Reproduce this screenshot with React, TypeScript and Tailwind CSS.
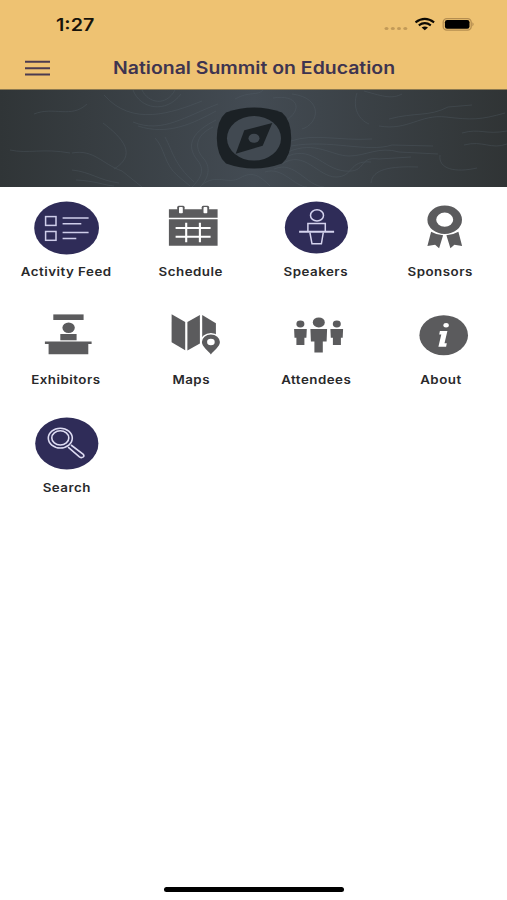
import type { ReactNode } from "react";

const NAVY = "#2f2c58";
const GRAY = "#5b5b5d";

const ActivityIcon = () => (
  <>
    <ellipse cx="40.6" cy="28" rx="32.4" ry="26.6" fill={NAVY} />
    <g fill="none" stroke="#cfcdea" strokeWidth="1.5">
      <rect x="19.6" y="16.6" width="10.4" height="8.8" />
      <rect x="19.6" y="31.5" width="10.4" height="8.8" />
      <path d="M36.6 18H62.6M36.6 23.7H55.3M36.6 32.6H62.6M36.6 38.4H50.3" />
    </g>
  </>
);

const ScheduleIcon = () => (
  <>
    <g fill={GRAY}>
      <path d="M17.9 9.3H66.6V17.7H17.9Z" />
      <path d="M17.9 19.3H66.6V45.7H17.9Z" />
      <rect x="26.2" y="5.7" width="7.4" height="9" rx="1.5" />
      <rect x="50.7" y="5.7" width="7.4" height="9" rx="1.5" />
    </g>
    <rect x="28" y="7.1" width="3.8" height="6.2" rx="0.8" fill="#fff" />
    <rect x="52.5" y="7.1" width="3.8" height="6.2" rx="0.8" fill="#fff" />
    <path
      d="M35.2 22.7V42.3M48.9 22.7V42.3M24.6 28H59.6M24.6 36.7H59.6"
      stroke="#fff"
      strokeWidth="2.1"
    />
  </>
);

const SpeakersIcon = () => (
  <>
    <ellipse cx="40.4" cy="27.4" rx="31.6" ry="26" fill={NAVY} />
    <g fill="none" stroke="#d5d3ee" strokeWidth="1.5">
      <ellipse cx="41" cy="15.4" rx="6.5" ry="5.6" />
      <path d="M31.9 31.5V23.5H49.3V31.5" />
      <path d="M23.1 31.8H58.1" strokeWidth="1.9" />
      <path d="M33.9 32.5L36 43.8H45.4L47.3 32.5" />
    </g>
  </>
);

const SponsorsIcon = () => (
  <g fill={GRAY}>
    <path
      fillRule="evenodd"
      d="M26.4 19.7a17.3 14.2 0 1 0 34.6 0a17.3 14.2 0 1 0 -34.6 0ZM35.2 19.7a8.5 7.1 0 1 1 17 0a8.5 7.1 0 1 1 -17 0Z"
    />
    <path d="M30.1 31.7Q35.5 34.8 42.1 35.3L38.1 48.3L34.1 44.7L26.4 46Z" />
    <path d="M57.4 31.7Q52 34.8 45.4 35.3L49.4 48.3L53.4 44.7L61.1 46Z" />
  </g>
);

const ExhibitorsIcon = () => (
  <g fill={GRAY}>
    <path d="M27.3 6.4H57.6V12H27.3Z" />
    <ellipse cx="42.6" cy="19.8" rx="6.2" ry="5.2" />
    <path d="M34.3 26H50.6V32.3H34.3Z" />
    <path d="M18.9 33.6H65.6V36H62.3V46.3H22.6V36H18.9Z" />
  </g>
);

const MapsIcon = () => (
  <>
    <g fill={GRAY}>
      <path d="M20.6 6.3L34.2 14V42.3L20.6 34.3Z" />
      <path d="M36.4 14L48.9 7V35.5L36.4 42.6Z" />
      <path d="M51.2 7L64.9 15.3V32H51.2Z" />
    </g>
    <path
      fill={GRAY}
      stroke="#fff"
      strokeWidth="3"
      paintOrder="stroke"
      d="M59.9 46.4C57.5 43 50.9 38.6 50.9 34A9 7.6 0 0 1 68.9 34C68.9 38.6 62.3 43 59.9 46.4Z"
    />
    <ellipse cx="59.9" cy="34" rx="3.8" ry="3.2" fill="#fff" />
  </>
);

const AttendeesIcon = () => (
  <g fill={GRAY}>
    <ellipse cx="42.8" cy="14.4" rx="6" ry="5" />
    <path d="M34.4 21H51.1L50.6 33.4H46.8V44.6H38.4V33.4H34.9Z" />
    <ellipse cx="24.4" cy="16" rx="4" ry="3.4" />
    <path d="M18.1 21H30.8L30.4 29.8H28.4V37H20.4V29.8H18.5Z" />
    <ellipse cx="60.8" cy="16" rx="4" ry="3.4" />
    <path d="M54.4 21H67.1L66.7 29.8H64.9V37H56.9V29.8H54.8Z" />
  </g>
);

const AboutIcon = () => (
  <>
    <ellipse cx="42.7" cy="27.2" rx="24.3" ry="20" fill={GRAY} />
    <g fill="#fff">
      <ellipse cx="45.1" cy="17.3" rx="2.7" ry="2.2" />
      <path d="M38.9 23H46.4L43.5 35.2H45.8L45.1 38.8H37.4L40.3 26.6H38.2Z" />
    </g>
  </>
);

const SearchIcon = () => (
  <>
    <ellipse cx="40.8" cy="27.4" rx="31.6" ry="26" fill={NAVY} />
    <g fill="none" stroke="#dddbf2" strokeWidth="1.6">
      <ellipse cx="34.3" cy="22.1" rx="12" ry="9.9" />
      <ellipse cx="34.3" cy="21.9" rx="8.5" ry="7.1" />
      <path d="M42.1 31.2L53.4 40.9Q55.6 42.3 57.2 41Q58.6 39.6 57 38L45 29" />
    </g>
  </>
);

interface MenuItem {
  label: string;
  icon: ReactNode;
}

const MENU_ITEMS: MenuItem[] = [
  { label: "Activity Feed", icon: <ActivityIcon /> },
  { label: "Schedule", icon: <ScheduleIcon /> },
  { label: "Speakers", icon: <SpeakersIcon /> },
  { label: "Sponsors", icon: <SponsorsIcon /> },
  { label: "Exhibitors", icon: <ExhibitorsIcon /> },
  { label: "Maps", icon: <MapsIcon /> },
  { label: "Attendees", icon: <AttendeesIcon /> },
  { label: "About", icon: <AboutIcon /> },
  { label: "Search", icon: <SearchIcon /> },
];

const StatusBar = () => (
  <div className="flex h-12 items-center justify-between pl-[56px] pr-[32px]">
    <span className="mt-[2px] origin-left scale-x-[1.16] text-[17px] leading-none font-semibold text-[#17130b]">
      1:27
    </span>
    <svg width="92" height="16" viewBox="0 0 92 16">
      <g fill="#c29a58">
        <ellipse cx="3.5" cy="12.6" rx="2" ry="1.5" />
        <ellipse cx="9.8" cy="12.6" rx="2" ry="1.5" />
        <ellipse cx="16" cy="12.6" rx="2" ry="1.5" />
        <ellipse cx="22.3" cy="12.6" rx="2" ry="1.5" />
      </g>
      <g fill="none" stroke="#0c0a05" strokeWidth="2.1">
        <path d="M32.5 6.3Q41.8 -0.7 51.1 6.3" />
        <path d="M35.8 9.4Q41.8 4.9 47.8 9.4" />
      </g>
      <path d="M38.6 11.6Q41.8 9.4 45 11.6L41.8 14.2Z" fill="#0c0a05" />
      <rect x="60.2" y="2.6" width="28" height="11.6" rx="3.6" fill="none" stroke="#b58e50" strokeWidth="1.3" />
      <rect x="61.9" y="4" width="24.6" height="8.8" rx="2.2" fill="#000" />
      <path d="M89.4 6.2Q92 8.2 89.4 10.4Z" fill="#b58e50" />
    </svg>
  </div>
);

const Banner = () => (
  <div className="h-[98px] border-t border-[#8c7950] bg-linear-to-r from-[#303537] via-[#434b53] to-[#303435]">
    <svg width="507" height="97" viewBox="0 1 507 97" className="block">
      {/* topographic contour lines */}
      <g fill="none" stroke="#56616a" strokeWidth="0.8" opacity="0.42">
        <path d="M142 1C148 14 166 18 175 1" />
        <path d="M133 1C140 20 166 25 181 5" />
        <path d="M104 6C132 38 172 24 202 12" />
        <path d="M133 33C162 45 186 27 218 15" />
        <path d="M138 37C168 47 194 34 216 22" />
        <path d="M216 31C194 42 184 55 198 72C206 82 199 91 192 98" />
        <path d="M213 38C198 45 192 57 204 70C212 80 207 91 200 98" />
        <path d="M155 49C165 59 164 76 178 87L190 97" />
        <path d="M165 48C173 63 174 75 194 93" />
        <path d="M103 34C124 50 137 66 114 80" />
        <path d="M72 64C94 60 102 75 122 82L142 98" />
        <path d="M72 81C91 83 98 91 119 94" />
        <path d="M76 91C96 92 103 96 114 97" />
        <path d="M34 25C54 17 71 30 87 15" />
        <path d="M10 61C28 65 43 59 70 64" />
        <path d="M273 9C297 5 305 20 284 33" />
        <path d="M292 5C324 9 319 35 302 40" />
        <path d="M291 52C314 44 339 52 372 50" />
        <path d="M291 57C330 50 367 64 392 56L433 57" />
        <path d="M288 63C315 51 332 67 349 67S379 57 399 63L438 65" />
        <path d="M284 69C311 54 322 80 345 82S357 67 379 70L411 68" />
        <path d="M282 75C304 60 318 88 336 88S348 71 371 73" />
        <path d="M274 80C295 71 306 97 324 98" />
        <path d="M265 83C282 77 295 98 307 98" />
        <path d="M357 4C352 19 359 31 369 35" />
        <path d="M364 2C385 8 392 10 402 5" />
        <path d="M379 37C408 42 420 25 446 28S480 31 505 24" />
        <path d="M389 30C415 23 429 28 448 18L472 16" />
        <path d="M371 94C372 80 391 77 418 78" />
        <path d="M440 66C438 80 455 84 477 79" />
        <path d="M462 44C480 39 485 46 507 42" />
        <path d="M464 56C483 51 491 61 507 55" />
        <path d="M235 10C249 2 258 7 263 1" />
        <path d="M202 96C216 84 228 96 240 89S259 86 270 97" />
      </g>
      <path
        d="M226 23.5Q254 13.5 282 23.5Q291 31 291.2 49Q291 67 282 74.5Q254 84.5 226 74.5Q217 67 216.8 49Q217 31 226 23.5Z"
        fill="#1b2125"
      />
      <ellipse cx="254" cy="49.3" rx="27" ry="22.3" fill="#414951" />
      <path d="M272.3 34L262.7 56.8L235.7 64.7L244.3 41.3Z" fill="#1b2125" />
      <ellipse cx="254" cy="49.3" rx="5.5" ry="4.5" fill="#414951" />
    </svg>
  </div>
);

const App = () => {
  return (
    <div className="flex h-[900px] w-[507px] flex-col overflow-hidden bg-white font-['Inter','Liberation_Sans',sans-serif]">
      <header className="h-[89px] shrink-0 bg-[#eec272]">
        <StatusBar />
        <div className="flex h-10 items-center">
          <button className="ml-[25px] w-[25px]" aria-label="Menu">
            <svg width="25" height="16" viewBox="0 0 25 16" className="block">
              <path
                d="M0 1.7H25M0 8.2H25M0 14.5H25"
                stroke="#4b3b50"
                strokeWidth="1.9"
              />
            </svg>
          </button>
          <h1 className="ml-[63px] origin-left scale-x-[1.144] whitespace-nowrap text-[17px] leading-none font-semibold text-[#3e3450]">
            National Summit on Education
          </h1>
        </div>
      </header>

      <Banner />

      <main className="grid grid-cols-4 px-1 pt-[13px]">
        {MENU_ITEMS.map((item) => (
          <button key={item.label} className="flex h-[108px] flex-col items-center">
            <svg width="80" height="56" viewBox="0 0 80 56">
              {item.icon}
            </svg>
            <span className="mt-[7px] scale-x-[1.16] whitespace-nowrap text-[11.5px] leading-[18px] font-semibold tracking-[0.42px] text-[#29292b]">
              {item.label}
            </span>
          </button>
        ))}
      </main>

      {/* home indicator */}
      <div className="mt-auto mb-[8px] ml-[164px] h-[5px] w-[180px] rounded-full bg-black" />
    </div>
  );
};

export default App;
